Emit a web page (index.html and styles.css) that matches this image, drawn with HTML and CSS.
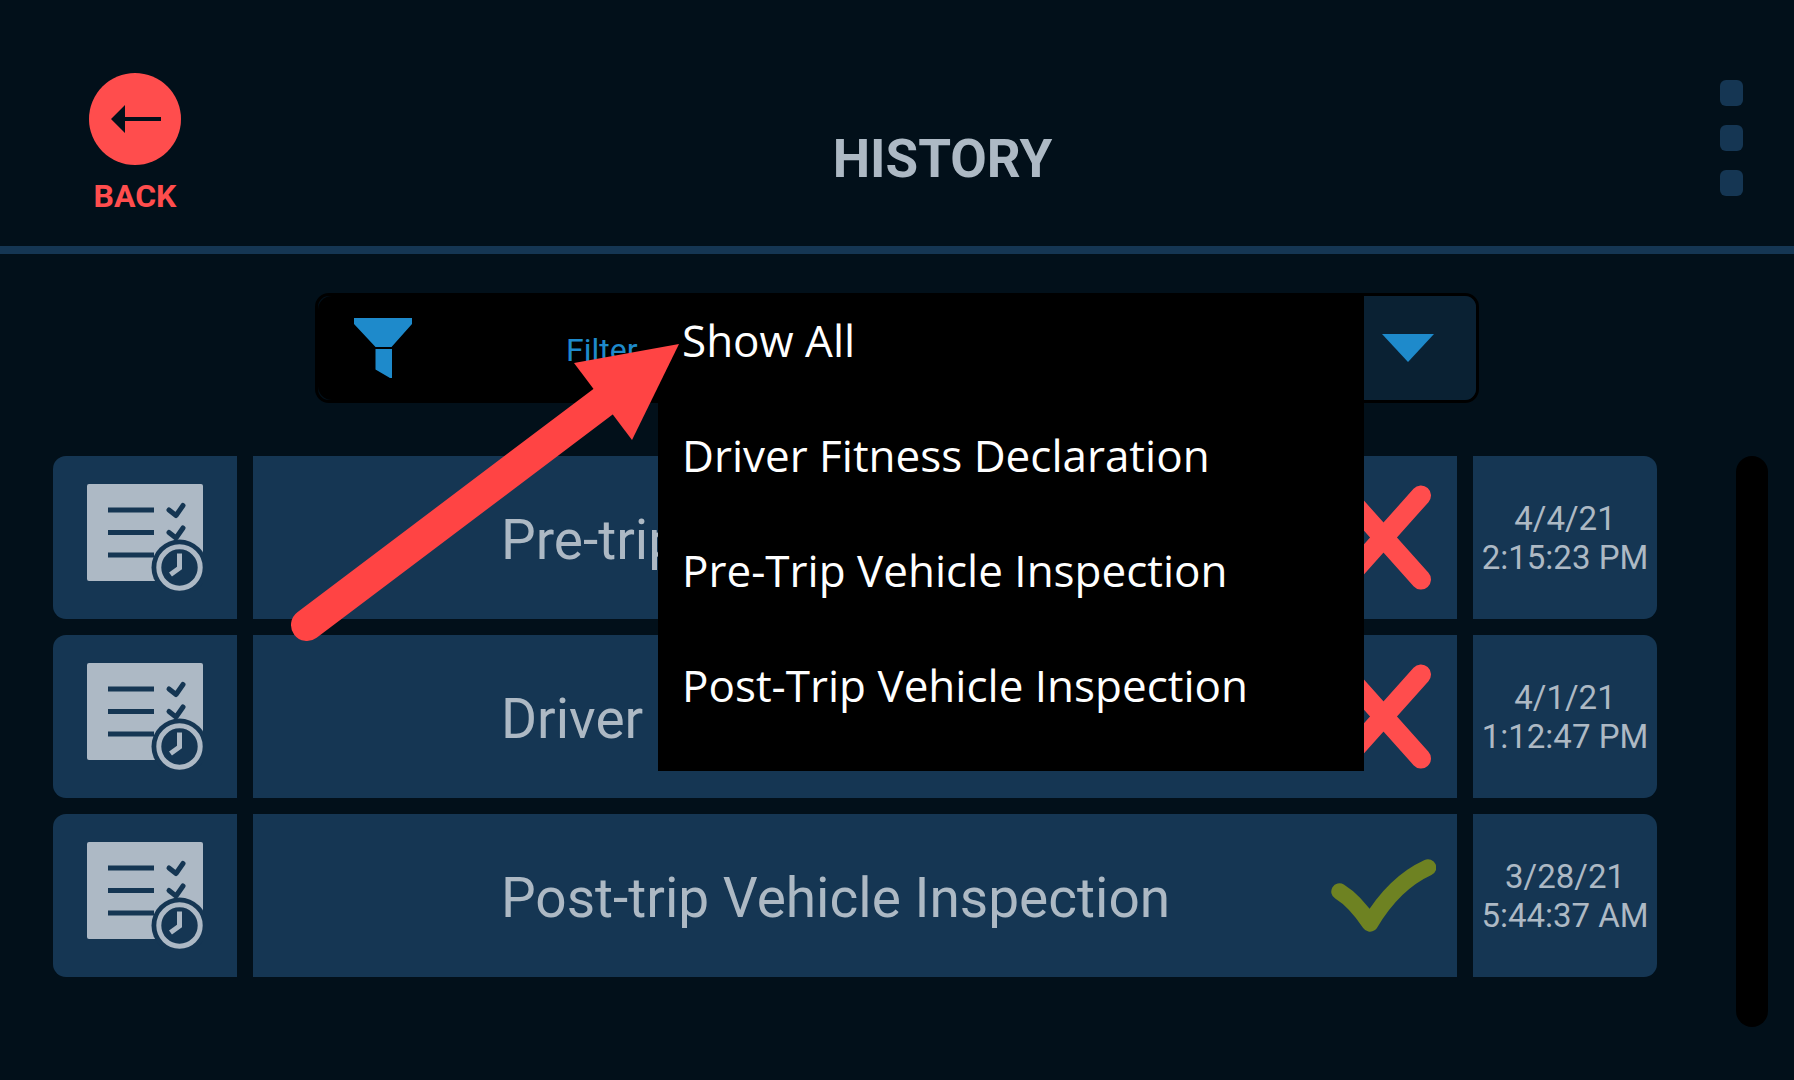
FILE: index.html
```html
<!DOCTYPE html>
<html lang="en">
<head>
<meta charset="utf-8">
<meta name="viewport" content="width=device-width, initial-scale=1">
<title>History</title>
<link rel="stylesheet" href="styles.css">
</head>
<body>
<svg class="sprite" aria-hidden="true">
  <symbol id="checklist" viewBox="0 0 116 107">
    <rect width="116" height="97" rx="2" fill="#adb9c5"/>
    <g fill="none" stroke="#153653" stroke-width="5">
      <path d="M21 26H67M21 48.500H67M21 71H67"/>
      <path d="M82 26l7 5.500 7-10M82 48.500l7 5.500 7-10" stroke-linecap="round" stroke-linejoin="round"/>
    </g>
    <circle cx="92.500" cy="83.500" r="28" fill="#153653"/>
    <circle cx="92.500" cy="83.500" r="20.700" fill="none" stroke="#adb9c5" stroke-width="5"/>
    <path d="M92.500 69.500V84l-9 6.500" fill="none" stroke="#adb9c5" stroke-width="5"/>
  </symbol>
  <symbol id="cross" viewBox="0 0 105 105">
    <path d="M15 10.500L90 94.500M90 10.500L15 94.500" fill="none" stroke="#ff4d4d" stroke-width="20" stroke-linecap="round"/>
  </symbol>
  <symbol id="tick" viewBox="0 0 105 105">
    <path d="M8.500 48.500Q24 58 39 80.500Q63 40 97 24.500" fill="none" stroke="#6e8222" stroke-width="16.500" stroke-linecap="round" stroke-linejoin="round"/>
  </symbol>
</svg>

<header class="header">
  <button class="back" type="button">
    <svg class="back-icon" viewBox="0 0 92 92" aria-hidden="true">
      <circle cx="46" cy="46" r="46" fill="#ff4d4d"/>
      <path d="M22 46L36 32V44H72V48H36V60Z" fill="#02101a"/>
    </svg>
    <span>BACK</span>
  </button>
  <h1 class="title">HISTORY</h1>
  <button class="more" type="button" aria-label="More options">
    <span class="dot"></span><span class="dot"></span><span class="dot"></span>
  </button>
</header>

<main class="main">
  <div class="filter">
    <label class="filter-label" for="filter-type">
      <svg class="funnel" viewBox="0 0 58 60" aria-hidden="true">
        <path d="M0 0H58V6L37.500 29H21.500L0 6ZM21.500 31H38V60H36L21.500 51.500Z" fill="#1e8acb"/>
      </svg>
      <span>Filter</span>
    </label>
    <button class="filter-toggle" type="button" aria-label="Toggle filter list">
      <svg class="caret" viewBox="0 0 52 28" aria-hidden="true"><path d="M0 0H52L26 28Z" fill="#1e8acb"/></svg>
    </button>
    <select class="menu" id="filter-type" size="4">
      <option>Show All</option>
      <option>Driver Fitness Declaration</option>
      <option>Pre-Trip Vehicle Inspection</option>
      <option>Post-Trip Vehicle Inspection</option>
    </select>
    <svg class="pointer" viewBox="0 0 392 304" aria-hidden="true">
      <path d="M17 285L314 61" stroke="#ff4444" stroke-width="32" stroke-linecap="round"/>
      <path d="M389 4L284 23L342 100Z" fill="#ff4444"/>
    </svg>
  </div>

  <div class="content">
    <ul class="list">
      <li class="row">
        <div class="cell cell-icon"><svg class="doc" aria-hidden="true"><use href="#checklist"/></svg></div>
        <div class="cell cell-name"><span>Pre-trip Vehicle Inspection</span><svg class="status" role="img" aria-label="Failed"><use href="#cross"/></svg></div>
        <div class="cell cell-date"><span>4/4/21</span><span>2:15:23 PM</span></div>
      </li>
      <li class="row">
        <div class="cell cell-icon"><svg class="doc" aria-hidden="true"><use href="#checklist"/></svg></div>
        <div class="cell cell-name"><span>Driver Fitness Declaration</span><svg class="status" role="img" aria-label="Failed"><use href="#cross"/></svg></div>
        <div class="cell cell-date"><span>4/1/21</span><span>1:12:47 PM</span></div>
      </li>
      <li class="row">
        <div class="cell cell-icon"><svg class="doc" aria-hidden="true"><use href="#checklist"/></svg></div>
        <div class="cell cell-name"><span>Post-trip Vehicle Inspection</span><svg class="status" role="img" aria-label="Passed"><use href="#tick"/></svg></div>
        <div class="cell cell-date"><span>3/28/21</span><span>5:44:37 AM</span></div>
      </li>
    </ul>
    <div class="scrollbar"></div>
  </div>
</main>
</body>
</html>
```
FILE: styles.css
```css
* {
  box-sizing: border-box;
}

body {
  display: flex;
  flex-direction: column;
  min-height: 100vh;
  margin: 0;
  background: #02101a;
  color: #adb9c4;
  font-family: Roboto, "Liberation Sans", sans-serif;
}

button {
  padding: 0;
  border: 0;
  background: none;
  font: inherit;
  cursor: pointer;
}

svg {
  display: block;
}

.sprite {
  display: none;
}

/* Header */
.header {
  display: flex;
  align-items: flex-start;
  padding: 73px 51px 32px 89px;
  border-bottom: 8px solid #153653;
}

.back {
  display: flex;
  flex-direction: column;
  align-items: center;
  gap: 13px;
  width: 92px;
  color: #ff4d4d;
  font-size: 32px;
  font-weight: 700;
  line-height: 36px;
}

.back-icon {
  width: 92px;
  height: 92px;
}

.title {
  flex: 1;
  margin: 0;
  padding: 54px 16px 0 0;
  text-align: center;
  font-size: 53px;
  font-weight: 700;
  line-height: 64px;
}

.more {
  display: flex;
  flex-direction: column;
  gap: 19px;
  padding-top: 7px;
}

.dot {
  width: 23px;
  height: 26px;
  border-radius: 6px;
  background: #153653;
}

/* Filter */
.main {
  flex: 1;
  display: flex;
  flex-direction: column;
  gap: 53px;
  padding: 39px 26px 53px 53px;
}

.filter {
  position: relative;
  display: flex;
  align-self: center;
  width: 100%;
  max-width: 1164px;
  height: 110px;
  margin-right: 27px;
  border: 3px solid #000;
  border-radius: 14px;
}

.filter-label {
  flex: 1;
  display: flex;
  align-items: center;
  gap: 154px;
  padding-left: 36px;
  border-radius: 14px 0 0 14px;
  background: #000;
  color: #1e8acb;
  font-size: 32px;
}

.filter-label span {
  padding-top: 3px;
}

.funnel {
  width: 58px;
  height: 60px;
}

.filter-toggle {
  display: flex;
  align-items: center;
  justify-content: center;
  width: 137px;
  border-radius: 0 11px 11px 0;
  background: #0a2133;
}

.caret {
  width: 52px;
  height: 28px;
}

.menu {
  position: absolute;
  top: -3px;
  left: 340px;
  right: 112px;
  z-index: 1;
  height: 478px;
  padding: 0;
  border: 0;
  border-radius: 0;
  outline: 0;
  overflow: hidden;
  background: #000;
  color: #fff;
  font-family: "Open Sans", "Noto Sans", sans-serif;
  font-size: 44px;
}

.menu option {
  min-height: 115px;
  padding: 17px 24px 34px;
  line-height: 64px;
}

.pointer {
  position: absolute;
  top: 44px;
  left: -28px;
  z-index: 2;
  width: 392px;
  height: 304px;
  pointer-events: none;
}

/* History list */
.content {
  flex: 1;
  display: flex;
  gap: 79px;
}

.list {
  flex: 1;
  display: flex;
  flex-direction: column;
  gap: 16px;
  margin: 0;
  padding: 0;
  list-style: none;
}

.row {
  display: grid;
  grid-template-columns: 184px 1fr 184px;
  gap: 16px;
  min-height: 163px;
}

.cell {
  display: flex;
  align-items: center;
  background: #153653;
}

.cell-icon {
  justify-content: center;
  border-radius: 13px 0 0 13px;
}

.doc {
  width: 116px;
  height: 107px;
}

.cell-name {
  justify-content: space-between;
  padding: 0 21px 0 248px;
  font-size: 55px;
}

.cell-name span {
  padding-top: 5px;
}

.status {
  width: 105px;
  height: 105px;
}

.cell-date {
  flex-direction: column;
  justify-content: center;
  border-radius: 0 13px 13px 0;
  font-size: 33px;
  line-height: 39px;
}

.scrollbar {
  width: 32px;
  border-radius: 16px;
  background: #000;
}
```
